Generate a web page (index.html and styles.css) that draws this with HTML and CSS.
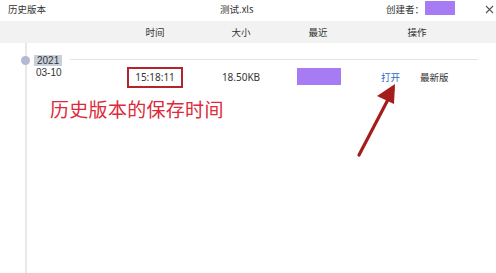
FILE: index.html
```html
<!DOCTYPE html>
<html lang="zh">
<head>
<meta charset="utf-8">
<title>历史版本</title>
<link rel="stylesheet" href="styles.css">
</head>
<body>
<div class="window">
  <div class="titlebar">
    <div class="title">历史版本</div>
    <div class="filename">测试.xls</div>
    <div class="creator">创建者：<span class="mask mask-sm"></span></div>
    <svg class="close" width="9" height="9" viewBox="0 0 9 9"><path d="M1 1L8 8M8 1L1 8" stroke="#555" stroke-width="1.1" fill="none"/></svg>
  </div>
  <div class="header cols">
    <div></div>
    <div class="c">时间</div>
    <div class="c">大小</div>
    <div class="c">最近</div>
    <div class="c">操作</div>
  </div>
  <div class="timeline">
    <div class="year-row">
      <span class="dot"></span>
      <span class="year">2021</span>
      <span class="rule"></span>
    </div>
    <div class="row cols inner">
      <div class="date">03-10</div>
      <div class="c"><span class="timebox">15:18:11</span></div>
      <div class="c cell">18.50KB</div>
      <div class="c"><span class="mask mask-lg"></span></div>
      <div class="c cell ops"><a class="open">打开</a><span class="latest">最新版</span></div>
    </div>
    <div class="note">历史版本的保存时间</div>
    <svg class="arrow" width="60" height="85" viewBox="0 0 60 85">
      <path d="M9 75L43 10" stroke="#a51c1c" stroke-width="3.2" stroke-linecap="round" fill="none"/>
      <path d="M45 4L27 16L44 24Z" fill="#a51c1c"/>
    </svg>
  </div>
</div>
</body>
</html>
```
FILE: styles.css
```css
* { box-sizing: border-box; }
html, body { margin: 0; padding: 0; background: #fff; }
body {
  font-family: "Noto Sans CJK SC", "Noto Sans", sans-serif;
  color: #333;
  font-size: 9.5px;
}
.window { width: 496px; height: 273px; overflow: hidden; position: relative; }
.titlebar {
  height: 21px;
  display: flex;
  align-items: flex-start;
  line-height: 18px;
  padding-left: 8px;
}
.title { width: 212px; }
.filename { width: 166px; }
.creator { display: flex; align-items: flex-start; }
.mask { display: inline-block; background: #a77bf3; }
.mask-sm { width: 30px; height: 14px; margin-top: 1px; margin-left: 1px; }
.close { margin-left: 30px; margin-top: 5px; }
.cols {
  display: grid;
  grid-template-columns: 110px 90px 82px 72px 126px;
}
.inner { grid-template-columns: 83px 90px 82px 72px 126px; }
.header {
  height: 22px;
  line-height: 22px;
  background: #f2f2f2;
}
.c { text-align: center; }
.timeline {
  margin-left: 25px;
  border-left: 2px solid #e8e8e8;
  height: 230px;
  padding-top: 12px;
  position: relative;
}
.year-row {
  display: flex;
  align-items: center;
  height: 11px;
  position: relative;
}
.dot {
  position: absolute;
  left: -6px;
  top: 1px;
  width: 9px;
  height: 9px;
  border-radius: 50%;
  background: #b4b9d2;
}
.year {
  margin-left: 7px;
  background: #c8d0dc;
  font-family: "Liberation Sans", sans-serif;
  font-size: 10px;
  line-height: 11px;
  height: 11px;
  padding: 0 3px 0 3px;
  color: #333;
}
.rule {
  flex: 1;
  height: 1px;
  background: #e4e4e4;
  margin-left: 8px;
  margin-right: 18px;
  margin-top: -3px;
}
.row { margin-top: 1px; align-items: start; font-size: 10px; }
.date {
  padding-left: 9px;
  line-height: 11px;
  font-family: "Liberation Sans", sans-serif;
}
.timebox {
  display: inline-block;
  height: 21px;
  width: 56px;
  border: 2px solid #b0262c;
  line-height: 17px;
  font-family: "Noto Sans", sans-serif;
  text-align: center;
}
.cell { line-height: 21px; font-family: "Noto Sans", "Noto Sans CJK SC", sans-serif; }
.mask-lg { width: 44px; height: 17px; margin-top: 1px; margin-left: 2px; }
.ops { display: flex; justify-content: flex-start; padding-left: 27px; font-size: 9.5px; }
.open { color: #2c6bc4; font-family: "Noto Sans CJK SC", sans-serif; }
.latest { margin-left: 20px; font-family: "Noto Sans CJK SC", sans-serif; }
.note {
  margin-left: 23px;
  margin-top: 8px;
  font-size: 19px;
  letter-spacing: 0.3px;
  line-height: 26px;
  color: #dc2a3a;
}
.arrow { position: absolute; left: 323px; top: 37px; }
```
